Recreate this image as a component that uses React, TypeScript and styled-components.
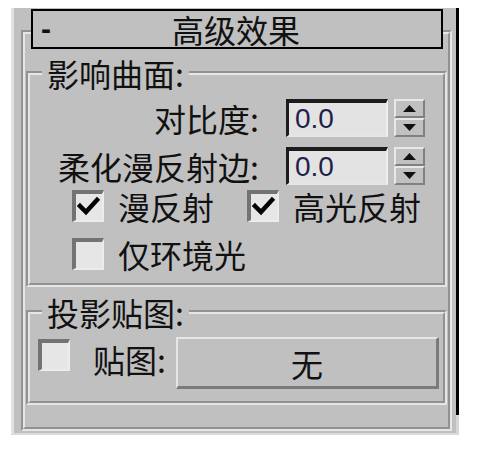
import React from "react";
import styled, { createGlobalStyle } from "styled-components";

const GlobalStyle = createGlobalStyle`
  html, body { margin: 0; padding: 0; background: #ffffff; }
  body {
    font-family: "Noto Sans CJK SC", "Noto Sans", sans-serif;
    color: #111111;
  }
  * { box-sizing: border-box; }
`;

const Page = styled.div`
  padding: 8px 0 0 11px;
`;

const Panel = styled.div`
  display: flex;
  width: 448px;
  height: 427px;
  background: #c0c0c0;
  border-left: 3px solid #e2e2e2;
  border-bottom: 2px solid #dadada;
`;

const Body = styled.div`
  flex: 1 1 auto;
  min-width: 0;
  padding: 22px 4px 0 7px;
`;

const ScrollTrack = styled.div`
  flex: 0 0 3px;
  width: 3px;
  align-self: stretch;
  display: flex;
  flex-direction: column;
  background: #d6d6d6;
`;

const ScrollThumb = styled.div<{ $size: number }>`
  flex: 0 0 ${(p) => p.$size}px;
  width: 3px;
  background: #000000;
`;

const Rollout = styled.div`
  height: 401px;
  border: 4px groove #e6e6e6;
  display: flex;
  flex-direction: column;
`;

const TitleBar = styled.div`
  margin: -25px 5px 0 6px;
  height: 40px;
  flex: none;
  border: 2px solid #000000;
  background: #c0c0c0;
  display: flex;
  align-items: center;
  font-size: 32px;
  line-height: 34px;
`;

const CollapseMark = styled.span`
  width: 22px;
  padding-left: 8px;
  font-family: "Liberation Sans", Arial, sans-serif;
  font-weight: bold;
  font-size: 30px;
`;

const TitleText = styled.span`
  flex: 1;
  text-align: center;
  padding-right: 24px;
`;

const Group = styled.fieldset<{ $top: number }>`
  margin: ${(p) => p.$top}px 1px 0 1px;
  padding: 0 0 12px 0;
  border: 4px groove #e6e6e6;
  min-width: 0;
`;

const Legend = styled.legend`
  margin-left: 12px;
  padding: 0 5px;
  font-size: 32px;
  line-height: 34px;
`;

const GroupContent = styled.div<{ $padTop: number }>`
  padding-top: ${(p) => p.$padTop}px;
  display: flex;
  flex-direction: column;
`;

const SpinRow = styled.div<{ $gap: number }>`
  display: flex;
  align-items: center;
  height: 38px;
  margin-top: ${(p) => p.$gap}px;
`;

const FieldLabel = styled.span`
  width: 229px;
  text-align: right;
  white-space: nowrap;
  font-size: 32px;
  line-height: 32px;
`;

const NumberField = styled.input`
  margin: 0 0 0 27px;
  width: 102px;
  height: 38px;
  border-style: solid;
  border-width: 4px 2px 2px 3px;
  border-color: #1c1c1c #efefef #e6e6e6 #1c1c1c;
  background: #e3e3e3;
  font-family: "Liberation Sans", Arial, sans-serif;
  font-size: 28px;
  color: #1f1f4a;
  padding: 0 0 0 6px;
  outline: none;
`;

const Spinner = styled.div`
  margin-left: 6px;
  width: 31px;
  height: 38px;
  display: flex;
  flex-direction: column;
`;

const SpinHalf = styled.div`
  flex: 1;
  background: #c0c0c0;
  border-style: solid;
  border-width: 2px;
  border-color: #e8e8e8 #808080 #808080 #e8e8e8;
  display: flex;
  align-items: center;
  justify-content: center;
`;

const CheckRow = styled.div<{ $gap: number; $indent: number }>`
  display: flex;
  align-items: center;
  height: 34px;
  margin-top: ${(p) => p.$gap}px;
  padding-left: ${(p) => p.$indent}px;
  gap: 33px;
`;

const CheckItem = styled.label`
  display: flex;
  align-items: center;
  gap: 14px;
  font-size: 32px;
  line-height: 34px;
  white-space: nowrap;
`;

const Box = styled.span`
  width: 32px;
  height: 32px;
  flex: none;
  border-style: solid;
  border-width: 4px 2px 2px 4px;
  border-color: #737373 #ececec #ececec #737373;
  background: #e6e6e6;
  display: flex;
  align-items: center;
  justify-content: center;
`;

const MapRow = styled.div`
  display: flex;
  align-items: flex-start;
  height: 52px;
  padding-left: 8px;
`;

const MapBox = styled(Box)`
  margin-top: 2px;
`;

const MapLabel = styled.span`
  margin: 5px 10px 0 23px;
  font-size: 32px;
  line-height: 34px;
  white-space: nowrap;
`;

const MapButton = styled.button`
  flex: 1;
  height: 52px;
  margin-right: 4px;
  background: #c0c0c0;
  border-style: solid;
  border-width: 2px 3px 3px 2px;
  border-color: #e6e6e6 #7a7a7a #7a7a7a #e6e6e6;
  font-family: "Noto Sans CJK SC", "Noto Sans", sans-serif;
  font-size: 32px;
  color: #111111;
  padding: 0;
`;

const Arrow = ({ up }: { up: boolean }) => (
  <svg width="13" height="7" viewBox="0 0 13 7">
    <polygon points={up ? "0,7 6.5,0 13,7" : "0,0 13,0 6.5,7"} fill="#111" />
  </svg>
);

const Tick = () => (
  <svg width="24" height="24" viewBox="0 0 24 24">
    <polyline
      points="3,11 9,17 20,5"
      fill="none"
      stroke="#000"
      strokeWidth="4.5"
      strokeLinecap="square"
    />
  </svg>
);

const CheckBox = ({ checked }: { checked?: boolean }) => (
  <Box>{checked ? <Tick /> : null}</Box>
);

const SpinnerField = ({ label, gap }: { label: string; gap: number }) => (
  <SpinRow $gap={gap}>
    <FieldLabel>{label}</FieldLabel>
    <NumberField readOnly value="0.0" />
    <Spinner>
      <SpinHalf>
        <Arrow up />
      </SpinHalf>
      <SpinHalf>
        <Arrow up={false} />
      </SpinHalf>
    </Spinner>
  </SpinRow>
);

export default function App() {
  return (
    <>
      <GlobalStyle />
      <Page>
        <Panel>
          <Body>
            <Rollout>
              <TitleBar>
                <CollapseMark>-</CollapseMark>
                <TitleText>高级效果</TitleText>
              </TitleBar>
              <Group $top={7}>
                <Legend>影响曲面:</Legend>
                <GroupContent $padTop={9}>
                  <SpinnerField label="对比度:" gap={0} />
                  <SpinnerField label="柔化漫反射边:" gap={10} />
                  <CheckRow $gap={4} $indent={42}>
                    <CheckItem>
                      <CheckBox checked />
                      漫反射
                    </CheckItem>
                    <CheckItem>
                      <CheckBox checked />
                      高光反射
                    </CheckItem>
                  </CheckRow>
                  <CheckRow $gap={14} $indent={42}>
                    <CheckItem>
                      <CheckBox />
                      仅环境光
                    </CheckItem>
                  </CheckRow>
                </GroupContent>
              </Group>
              <Group $top={8}>
                <Legend>投影贴图:</Legend>
                <GroupContent $padTop={8}>
                  <MapRow>
                    <MapBox />
                    <MapLabel>贴图:</MapLabel>
                    <MapButton>无</MapButton>
                  </MapRow>
                </GroupContent>
              </Group>
            </Rollout>
          </Body>
          <ScrollTrack>
            <ScrollThumb $size={407} />
          </ScrollTrack>
        </Panel>
      </Page>
    </>
  );
}
